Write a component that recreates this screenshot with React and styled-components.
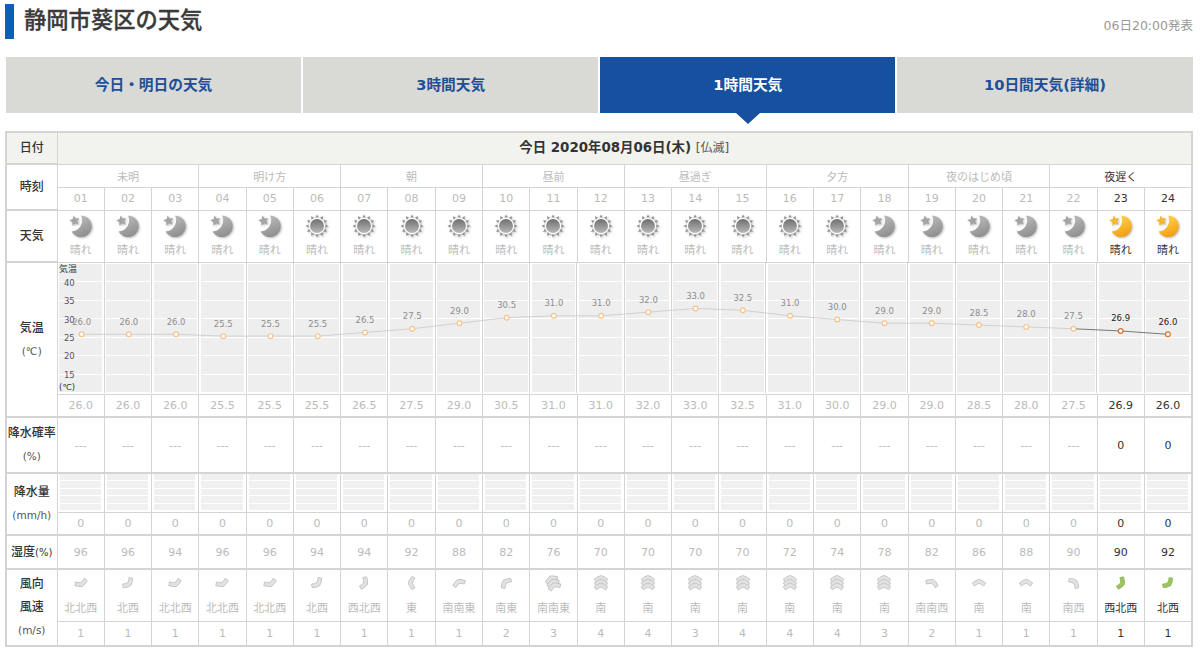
import React from 'react';
import styled, {createGlobalStyle} from 'styled-components';

const LINE = '#d4d4d4';
const MUTED = '#bbb';
const DARK = '#333';
const COL_W = 1136 / 24;

const temps = [26, 26, 26, 25.5, 25.5, 25.5, 26.5, 27.5, 29, 30.5, 31, 31, 32, 33, 32.5, 31, 30, 29, 29, 28.5, 28, 27.5, 26.9, 26];
const humidity = [96, 96, 94, 96, 96, 94, 94, 92, 88, 82, 76, 70, 70, 70, 70, 72, 74, 78, 82, 86, 88, 90, 90, 92];
const speeds = [1, 1, 1, 1, 1, 1, 1, 1, 1, 2, 3, 4, 4, 3, 4, 4, 4, 3, 2, 1, 1, 1, 1, 1];
const dirs = ['北北西', '北西', '北北西', '北北西', '北北西', '北西', '西北西', '東', '南南東', '南東', '南南東', '南', '南', '南', '南', '南', '南', '南', '南南西', '南', '南', '南西', '西北西', '北西'];
const dirAngle = {北: 0, 北西: 315, 北北西: 337.5, 西北西: 292.5, 東: 90, 南南東: 157.5, 南東: 135, 南: 180, 南南西: 202.5, 南西: 225};
const periods = ['未明', '明け方', '朝', '昼前', '昼過ぎ', '夕方', '夜のはじめ頃', '夜遅く'];
const hours = temps.map((_, i) => i + 1);
const isPast = h => h <= 22;
const isSun = h => h >= 6 && h <= 17;

const GlobalStyle = createGlobalStyle`
  html, body {
    margin: 0;
    background: #fff;
    font-family: "DejaVu Sans", "Noto Sans CJK JP", sans-serif;
    color: ${DARK};
  }
`;

const Page = styled.div`
  width: 1200px;
  height: 652px;
  overflow: hidden;
  padding: 4px 7px 0 5px;
  box-sizing: border-box;
`;

const Header = styled.header`
  display: flex;
  justify-content: space-between;
  height: 35px;
`;

const Title = styled.h1`
  margin: 0;
  padding-left: 10px;
  border-left: 9px solid #0f5cbd;
  font-size: 22.3px;
  line-height: 32px;
  font-weight: 500;
  color: #3a3a3a;
  -webkit-text-stroke: 0.3px #3a3a3a;
`;

const Announced = styled.div`
  align-self: flex-end;
  font-size: 12.5px;
  line-height: 14px;
  margin-bottom: 6px;
  color: #9a9a9a;
`;

const Tabs = styled.nav`
  display: flex;
  gap: 2px;
  margin: 18px 0.5px 18px 1px;
`;

const Tab = styled.div`
  position: relative;
  flex: 1;
  height: 56px;
  padding-bottom: 3px;
  box-sizing: border-box;
  display: flex;
  align-items: center;
  justify-content: center;
  font-size: 14.7px;
  font-weight: 700;
  background: ${p => (p.$active ? '#16509f' : '#d9d9d5')};
  color: ${p => (p.$active ? '#fff' : '#1d4f96')};

  ${p =>
    p.$active &&
    `&::after {
      content: '';
      position: absolute;
      top: 100%;
      left: 50%;
      margin-left: -12px;
      border-style: solid;
      border-width: 11px 12px 0 12px;
      border-color: #16509f transparent transparent transparent;
    }`}
`;

const Table = styled.table`
  width: 1188px;
  table-layout: fixed;
  border-collapse: collapse;
  border: 2px solid ${LINE};
  font-size: 11px;
  text-align: center;
`;

const Row = styled.tr`
  height: ${p => p.$h}px;
`;

const Label = styled.th`
  padding: 0;
  font-size: 12px;
  line-height: 23px;
  font-weight: 500;
  color: #333;
  border: 1px solid ${LINE};
  border-top-width: 2px;
  background: ${p => (p.$shaded ? '#f2f2ee' : '#fff')};
`;

const Unit = styled.span`
  display: block;
  font-size: 10.5px;
  font-weight: 500;
  color: #555;
`;

const Percent = styled.span`
  font-size: 10px;
`;

const DateCell = styled.td`
  padding: 0 0 4px;
  background: #f2f2ee;
  font-size: 13.4px;
  font-weight: 700;
  border: 1px solid ${LINE};

  small {
    font-size: 12px;
    font-weight: 400;
    color: #555;
  }
`;

const Cell = styled.td`
  padding: 0;
  border: 1px solid ${LINE};
  border-top-width: ${p => (p.$thick ? 2 : 1)}px;
  color: ${p => (p.$past ? MUTED : DARK)};
  font-size: 11px;
  vertical-align: middle;
`;

const WeatherBox = styled.div`
  display: flex;
  flex-direction: column;
  align-items: center;
  gap: 5px;
  padding-top: 1px;
  font-size: 11px;
  line-height: 16px;
`;

const ChartCell = styled.td`
  padding: 0;
  height: 131px;
  border-top: 1px solid ${LINE};
`;

const ChartWrap = styled.div`
  position: relative;
  display: flex;
  height: 130px;
`;

const ChartColumn = styled.div`
  flex: 1;
  box-sizing: border-box;
  border-left: ${p => (p.$first ? 'none' : `1px solid ${LINE}`)};
  padding: 1px 1.5px;
`;

const Bands = styled.div`
  height: 100%;
  background-color: #eee;
  background-image: repeating-linear-gradient(to bottom, #eee 0, #eee 17.5px, #fff 17.5px, #fff 18.5px);
`;

const ChartLayer = styled.svg`
  position: absolute;
  left: 0;
  top: 0;
  width: 100%;
  height: 100%;
`;

const RainBands = styled.div`
  height: 37px;
  margin: 0 3px 0 2px;
  background-image: repeating-linear-gradient(to bottom, #f0f0f0 0, #f0f0f0 6.5px, #fff 6.5px, #fff 7.5px);
`;

const WindBox = styled.div`
  display: flex;
  flex-direction: column;
  align-items: center;
  gap: 9px;
  line-height: 15px;
  font-size: 11px;
`;

const IconSvg = styled.svg`
  display: block;
  width: ${p => p.$size}px;
  height: ${p => p.$size}px;
  filter: drop-shadow(${p => (p.$soft ? '0.5px 0.5px 0.5px rgba(0, 0, 0, 0.15)' : '1px 1px 1px rgba(0, 0, 0, 0.28)')});
`;

const starPoints = (cx, cy, r) =>
  Array.from({length: 10}, (_, i) => {
    const rad = i % 2 ? r * 0.48 : r;
    const a = (Math.PI * i) / 5 - Math.PI / 2 - 0.2;
    return `${(cx + rad * Math.cos(a)).toFixed(2)},${(cy + rad * Math.sin(a)).toFixed(2)}`;
  }).join(' ');

const MoonIcon = ({active, id}) => (
  <IconSvg $size={24} viewBox="0 0 24 24">
    <defs>
      <linearGradient id={id} x1="0.3" y1="0" x2="0.7" y2="1">
        <stop offset="0" stopColor={active ? '#ffd84a' : '#bdbdbd'} />
        <stop offset="1" stopColor={active ? '#f39a12' : '#8c8c8c'} />
      </linearGradient>
    </defs>
    <path d="M12 1.5 A10.8 10.8 0 1 1 2.5 17.5 A11 11 0 0 0 12 1.5 Z" fill={`url(#${id})`} />
    <polygon points={starPoints(5.6, 6.8, 5.4)} fill={active ? '#f9b52c' : '#a4a4a4'} />
  </IconSvg>
);

const SunIcon = ({id}) => {
  const rays = Array.from({length: 12}, (_, i) => i * 30);
  return (
    <IconSvg $size={24} viewBox="0 0 24 24">
      <defs>
        <linearGradient id={id} x1="0" y1="0" x2="0" y2="1">
          <stop offset="0" stopColor="#6f6f6f" />
          <stop offset="1" stopColor="#b8b8b8" />
        </linearGradient>
      </defs>
      {rays.map(a => (
        <polygon key={a} points="10.4,3.6 13.6,3.6 12,0.4" fill="#8f8f8f" transform={`rotate(${a} 12 12)`} />
      ))}
      <circle cx="12" cy="12" r="8.2" fill="#fff" />
      <circle cx="12" cy="12" r="7" fill={`url(#${id})`} />
    </IconSvg>
  );
};

const WindIcon = ({dir, speed, past}) => {
  const layers = speed >= 3 ? 3 : 1;
  const rot = dirAngle[dir] - 180;
  const offsets = Array.from({length: layers}, (_, i) => (i - (layers - 1) / 2) * 4.2);
  return (
    <IconSvg $size={18} $soft viewBox="0 0 20 20">
      <g transform={`rotate(${rot} 10 10)`}>
        {offsets.map(o => (
          <path
            key={o}
            transform={`translate(0 ${o})`}
            d="M10 5.8 Q14 7 17.4 10 L15.2 13.4 Q12.4 11.2 10 10.4 Q7.6 11.2 4.8 13.4 L2.6 10 Q6 7 10 5.8 Z"
            fill={past ? '#e2e2e2' : '#9cc65c'}
            stroke={past ? '#b4b4b4' : '#85b045'}
            strokeWidth="0.6"
          />
        ))}
      </g>
    </IconSvg>
  );
};

const tempY = t => 19.5 + (40 - t) * 3.7;

const TempChart = () => {
  const pts = temps.map((t, i) => ({t, x: (i + 0.5) * COL_W, y: tempY(t)}));
  const poly = (a, b) => pts.slice(a, b).map(p => `${p.x},${p.y}`).join(' ');
  return (
    <ChartLayer viewBox="0 0 1136 130">
      <text x="1" y="9" fontSize="9" fill="#333">気温</text>
      {[40, 35, 30, 25, 20, 15].map(v => (
        <text key={v} x="6" y={tempY(v) + 3} fontSize="8.5" fill="#555">{v}</text>
      ))}
      <text x="1" y="127" fontSize="8.5" fill="#333">(℃)</text>
      <polyline points={poly(0, 22)} fill="none" stroke="#d0d0d0" strokeWidth="1" />
      <polyline points={poly(21, 24)} fill="none" stroke="#777" strokeWidth="1" />
      {pts.map((p, i) => {
        const past = isPast(i + 1);
        return (
          <g key={i}>
            <text x={p.x} y={p.y - 9.5} textAnchor="middle" fontSize="8.5" fill={past ? '#8d8d8d' : '#222'}>
              {p.t.toFixed(1)}
            </text>
            <circle cx={p.x} cy={p.y} r="2.4" fill="#fff" stroke={past ? '#f5c48c' : '#d9772a'} strokeWidth="1.2" />
          </g>
        );
      })}
    </ChartLayer>
  );
};

const tabs = ['今日・明日の天気', '3時間天気', '1時間天気', '10日間天気(詳細)'];

const App = () => (
  <Page>
    <GlobalStyle />
    <Header>
      <Title>静岡市葵区の天気</Title>
      <Announced>06日20:00発表</Announced>
    </Header>
    <Tabs>
      {tabs.map((t, i) => (
        <Tab key={t} $active={i === 2}>{t}</Tab>
      ))}
    </Tabs>
    <Table>
      <colgroup>
        <col style={{width: 51}} />
        {hours.map(h => <col key={h} />)}
      </colgroup>
      <tbody>
        <Row $h={32}>
          <Label $shaded>日付</Label>
          <DateCell colSpan={24}>
            今日 2020年08月06日(木) <small>[仏滅]</small>
          </DateCell>
        </Row>
        <Row $h={23}>
          <Label rowSpan={2}>時刻</Label>
          {periods.map((p, i) => (
            <Cell key={p} colSpan={3} $past={i < 7}>{p}</Cell>
          ))}
        </Row>
        <Row $h={23}>
          {hours.map(h => (
            <Cell key={h} $past={isPast(h)}>{String(h).padStart(2, '0')}</Cell>
          ))}
        </Row>
        <Row $h={52}>
          <Label>天気</Label>
          {hours.map(h => (
            <Cell key={h} $past={isPast(h)}>
              <WeatherBox>
                {isSun(h) ? <SunIcon id={`sun${h}`} /> : <MoonIcon id={`moon${h}`} active={!isPast(h)} />}
                晴れ
              </WeatherBox>
            </Cell>
          ))}
        </Row>
        <Row $h={131}>
          <Label rowSpan={2}>
            気温
            <Unit>(℃)</Unit>
          </Label>
          <ChartCell colSpan={24}>
            <ChartWrap>
              {hours.map(h => (
                <ChartColumn key={h} $first={h === 1}>
                  <Bands />
                </ChartColumn>
              ))}
              <TempChart />
            </ChartWrap>
          </ChartCell>
        </Row>
        <Row $h={23}>
          {temps.map((t, i) => (
            <Cell key={i} $past={isPast(i + 1)}>{t.toFixed(1)}</Cell>
          ))}
        </Row>
        <Row $h={56}>
          <Label>
            降水確率
            <Unit>(%)</Unit>
          </Label>
          {hours.map(h => (
            <Cell key={h} $past={isPast(h)} $thick>{isPast(h) ? '---' : '0'}</Cell>
          ))}
        </Row>
        <Row $h={39}>
          <Label rowSpan={2}>
            降水量
            <Unit>(mm/h)</Unit>
          </Label>
          {hours.map(h => (
            <Cell key={h} $thick>
              <RainBands />
            </Cell>
          ))}
        </Row>
        <Row $h={23}>
          {hours.map(h => (
            <Cell key={h} $past={isPast(h)}>0</Cell>
          ))}
        </Row>
        <Row $h={34}>
          <Label>
            湿度<Percent>(%)</Percent>
          </Label>
          {humidity.map((v, i) => (
            <Cell key={i} $past={isPast(i + 1)} $thick>{v}</Cell>
          ))}
        </Row>
        <Row $h={52}>
          <Label rowSpan={2}>
            風向
            <br />
            風速
            <Unit>(m/s)</Unit>
          </Label>
          {dirs.map((d, i) => (
            <Cell key={i} $past={isPast(i + 1)} $thick>
              <WindBox>
                <WindIcon dir={d} speed={speeds[i]} past={isPast(i + 1)} />
                {d}
              </WindBox>
            </Cell>
          ))}
        </Row>
        <Row $h={25}>
          {speeds.map((s, i) => (
            <Cell key={i} $past={isPast(i + 1)}>{s}</Cell>
          ))}
        </Row>
      </tbody>
    </Table>
  </Page>
);

export default App;
